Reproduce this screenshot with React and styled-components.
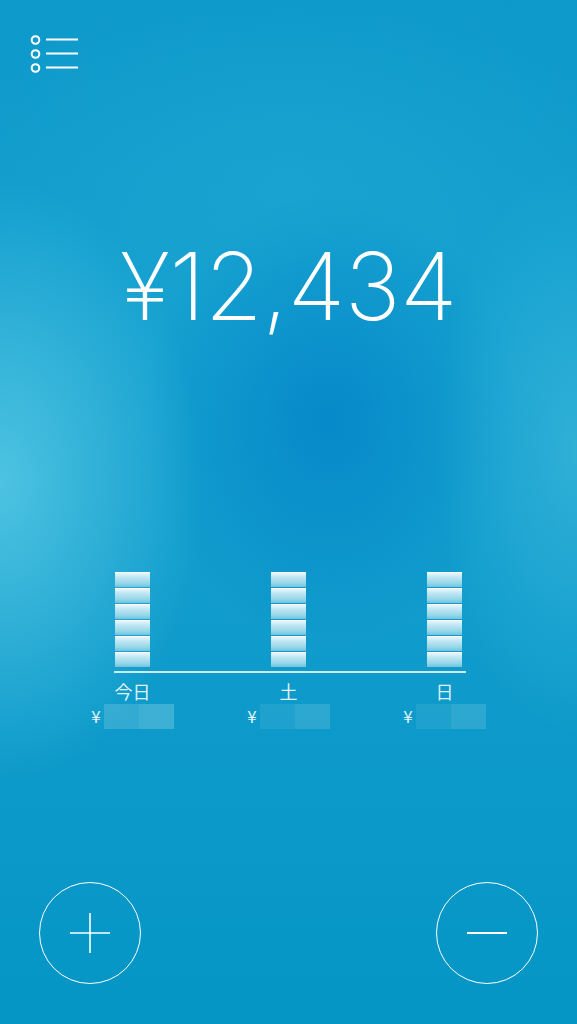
import styled, { createGlobalStyle } from "styled-components";

const GlobalStyle = createGlobalStyle`
  html, body {
    margin: 0;
    padding: 0;
  }
  body {
    font-family: Inter, "Noto Sans CJK JP", sans-serif;
    color: #fff;
  }
`;

const days = [
  { label: "今日", count: 6, tone: [0.16, 0.2] },
  { label: "土", count: 6, tone: [0.08, 0.13] },
  { label: "日", count: 6, tone: [0.08, 0.13] },
];

function MenuIcon() {
  return (
    <svg width="50" height="40" viewBox="0 0 50 40" fill="none" stroke="#fff" strokeWidth="2">
      <circle cx="5.5" cy="6" r="3.8" />
      <circle cx="5.5" cy="20" r="3.8" />
      <circle cx="5.5" cy="34" r="3.8" />
      <line x1="16" y1="5.5" x2="48" y2="5.5" />
      <line x1="16" y1="19.5" x2="48" y2="19.5" />
      <line x1="16" y1="33.5" x2="48" y2="33.5" />
    </svg>
  );
}

export default function App() {
  return (
    <>
      <GlobalStyle />
      <Screen>
        <Header>
          <MenuButton>
            <MenuIcon />
          </MenuButton>
        </Header>

        <Amount>¥12,434</Amount>

        <Chart>
          <Columns>
            {days.map((d) => (
              <Stack key={d.label}>
                {Array.from({ length: d.count }).map((_, i) => (
                  <Segment key={i} />
                ))}
              </Stack>
            ))}
          </Columns>
          <Baseline />
          <Columns>
            {days.map((d) => (
              <DayLabel key={d.label}>{d.label}</DayLabel>
            ))}
          </Columns>
          <Columns>
            {days.map((d) => (
              <Value key={d.label}>
                <Yen>¥</Yen>
                <Masked>
                  <MaskCell $alpha={d.tone[0]} />
                  <MaskCell $alpha={d.tone[1]} />
                </Masked>
              </Value>
            ))}
          </Columns>
        </Chart>

        <Footer>
          <RoundButton aria-label="add">
            <svg width="42" height="42" viewBox="0 0 42 42" stroke="#fff" strokeWidth="1.6">
              <line x1="1" y1="21" x2="41" y2="21" />
              <line x1="21" y1="1" x2="21" y2="41" />
            </svg>
          </RoundButton>
          <RoundButton aria-label="subtract">
            <svg width="42" height="42" viewBox="0 0 42 42" stroke="#fff" strokeWidth="2.2">
              <line x1="1" y1="21" x2="41" y2="21" />
            </svg>
          </RoundButton>
        </Footer>
      </Screen>
    </>
  );
}

const Screen = styled.div`
  width: 577px;
  height: 1024px;
  display: flex;
  flex-direction: column;
  overflow: hidden;
  background:
    radial-gradient(ellipse 270px 400px at 0% 47%, rgba(92, 204, 230, 0.8), rgba(92, 204, 230, 0) 75%),
    radial-gradient(ellipse 190px 380px at 100% 44%, rgba(70, 190, 222, 0.55), rgba(70, 190, 222, 0) 75%),
    radial-gradient(ellipse 250px 300px at 57% 41%, rgba(4, 132, 200, 0.8), rgba(4, 132, 200, 0) 75%),
    radial-gradient(ellipse 420px 260px at 50% 18%, rgba(40, 175, 215, 0.35), rgba(40, 175, 215, 0) 80%),
    linear-gradient(180deg, #0d9acb 0%, #14a0cf 35%, #109ccc 60%, #0596c6 100%);
`;

const Header = styled.div`
  display: flex;
  padding: 34px 0 0 30px;
`;

const MenuButton = styled.div`
  width: 50px;
  height: 40px;
  display: flex;
`;

const Amount = styled.div`
  margin-top: 165px;
  text-align: center;
  font-family: Inter, "Liberation Sans", sans-serif;
  font-weight: 200;
  font-size: 94px;
  line-height: 94px;
  letter-spacing: -0.5px;
  color: #fff;
`;

const Chart = styled.div`
  margin: 239px auto 0;
  width: 468px;
  display: flex;
  flex-direction: column;
`;

const Columns = styled.div`
  display: grid;
  grid-template-columns: repeat(3, 156px);
`;

const Stack = styled.div`
  justify-self: center;
  width: 35px;
  display: flex;
  flex-direction: column;
  gap: 1px;
`;

const Segment = styled.div`
  height: 15px;
  background: linear-gradient(180deg, #f2fbfd 0%, #c4e9f4 30%, #96d6ea 75%, #72c2de 100%);
  box-shadow: inset 0 1px 0 rgba(255, 255, 255, 0.9);
`;

const Baseline = styled.div`
  margin: 4px 57px 0 59px;
  height: 1.5px;
  background: rgba(235, 248, 252, 0.85);
`;

const DayLabel = styled.div`
  margin-top: 8px;
  text-align: center;
  font-family: "Noto Sans CJK JP", sans-serif;
  font-size: 18px;
  line-height: 20px;
  color: rgba(255, 255, 255, 0.88);
`;

const Value = styled.div`
  margin-top: 3px;
  display: flex;
  justify-content: center;
  align-items: center;
  gap: 3px;
`;

const Yen = styled.span`
  font-family: "Noto Sans CJK JP", sans-serif;
  font-size: 17px;
  line-height: 20px;
  color: rgba(255, 255, 255, 0.9);
`;

const Masked = styled.div`
  display: flex;
  height: 25px;
`;

const MaskCell = styled.div`
  width: 35px;
  background: rgba(255, 255, 255, ${(p) => p.$alpha});
`;

const Footer = styled.div`
  margin-top: auto;
  padding: 0 39px 40px;
  display: flex;
  justify-content: space-between;
`;

const RoundButton = styled.div`
  width: 102px;
  height: 102px;
  box-sizing: border-box;
  border: 1.6px solid #fff;
  border-radius: 50%;
  display: flex;
  align-items: center;
  justify-content: center;
`;
